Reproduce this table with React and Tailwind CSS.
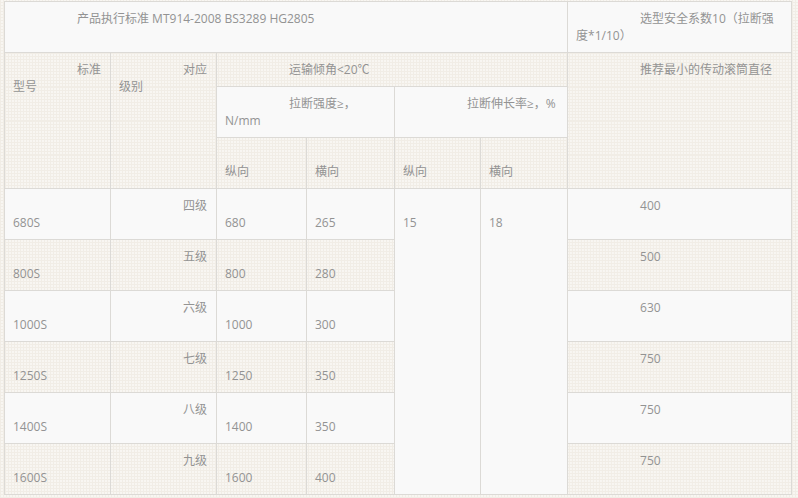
import React from 'react';

const rows = [
    ['680S', '四级', '680', '265', '400'],
    ['800S', '五级', '800', '280', '500'],
    ['1000S', '六级', '1000', '300', '630'],
    ['1250S', '七级', '1250', '350', '750'],
    ['1400S', '八级', '1400', '350', '750'],
    ['1600S', '九级', '1600', '400', '750'],
];

// cream grid texture used on striped rows and page
const paper = 'bg-[#f8f6f2] bg-[image:repeating-linear-gradient(0deg,#f1ede6_0px,#f1ede6_1px,transparent_1px,transparent_3px),repeating-linear-gradient(90deg,#f1ede6_0px,#f1ede6_1px,transparent_1px,transparent_3px)]';
const plain = 'bg-[#f9f9f9]';

const Cell = ({ children, className = '', ...rest }) => (
    <td
        {...rest}
        className={`border border-[#dcdad6] px-2 py-2 align-top indent-16 leading-[17px] ${className}`}
    >
        {'\u200B'}{children}
    </td>
);

const App = () => {
    return (
        <div
            className={`w-[798px] h-[498px] overflow-hidden pl-[4px] pt-[1px] ${paper}`}
            style={{ fontFamily: '"Open Sans", "Noto Sans CJK SC", sans-serif' }}
        >
            <table className="table-fixed border-collapse w-[787px] text-[12px] text-[#939393]">
                <colgroup>
                    <col className="w-[106px]" />
                    <col className="w-[106px]" />
                    <col className="w-[90px]" />
                    <col className="w-[88px]" />
                    <col className="w-[86px]" />
                    <col className="w-[87px]" />
                    <col className="w-[224px]" />
                </colgroup>
                <tbody>
                    <tr className={plain}>
                        <Cell colSpan={6} className="h-[50px]">产品执行标准 MT914-2008 BS3289 HG2805</Cell>
                        <Cell>选型安全系数10（拉断强度*1/10）</Cell>
                    </tr>
                    <tr className={paper}>
                        <Cell rowSpan={3}>标准型号</Cell>
                        <Cell rowSpan={3}>对应级别</Cell>
                        <Cell colSpan={4} className="h-[34px]">运输倾角&lt;20℃</Cell>
                        <Cell rowSpan={3}>推荐最小的传动滚筒直径</Cell>
                    </tr>
                    <tr className={plain}>
                        <Cell colSpan={2} className="h-[49px]">拉断强度≥，N/mm</Cell>
                        <Cell colSpan={2}>拉断伸长率≥，%</Cell>
                    </tr>
                    <tr className={paper}>
                        <Cell className="h-[50px]">纵向</Cell>
                        <Cell>横向</Cell>
                        <Cell>纵向</Cell>
                        <Cell>横向</Cell>
                    </tr>
                    {rows.map((r, i) => (
                        <tr key={r[0]} className={i % 2 === 0 ? plain : paper}>
                            <Cell className="h-[50px]">{r[0]}</Cell>
                            <Cell>{r[1]}</Cell>
                            <Cell>{r[2]}</Cell>
                            <Cell>{r[3]}</Cell>
                            {i === 0 && (
                                <>
                                    <Cell rowSpan={6} className={plain}>15</Cell>
                                    <Cell rowSpan={6} className={plain}>18</Cell>
                                </>
                            )}
                            <Cell>{r[4]}</Cell>
                        </tr>
                    ))}
                </tbody>
            </table>
        </div>
    );
};

export default App;
